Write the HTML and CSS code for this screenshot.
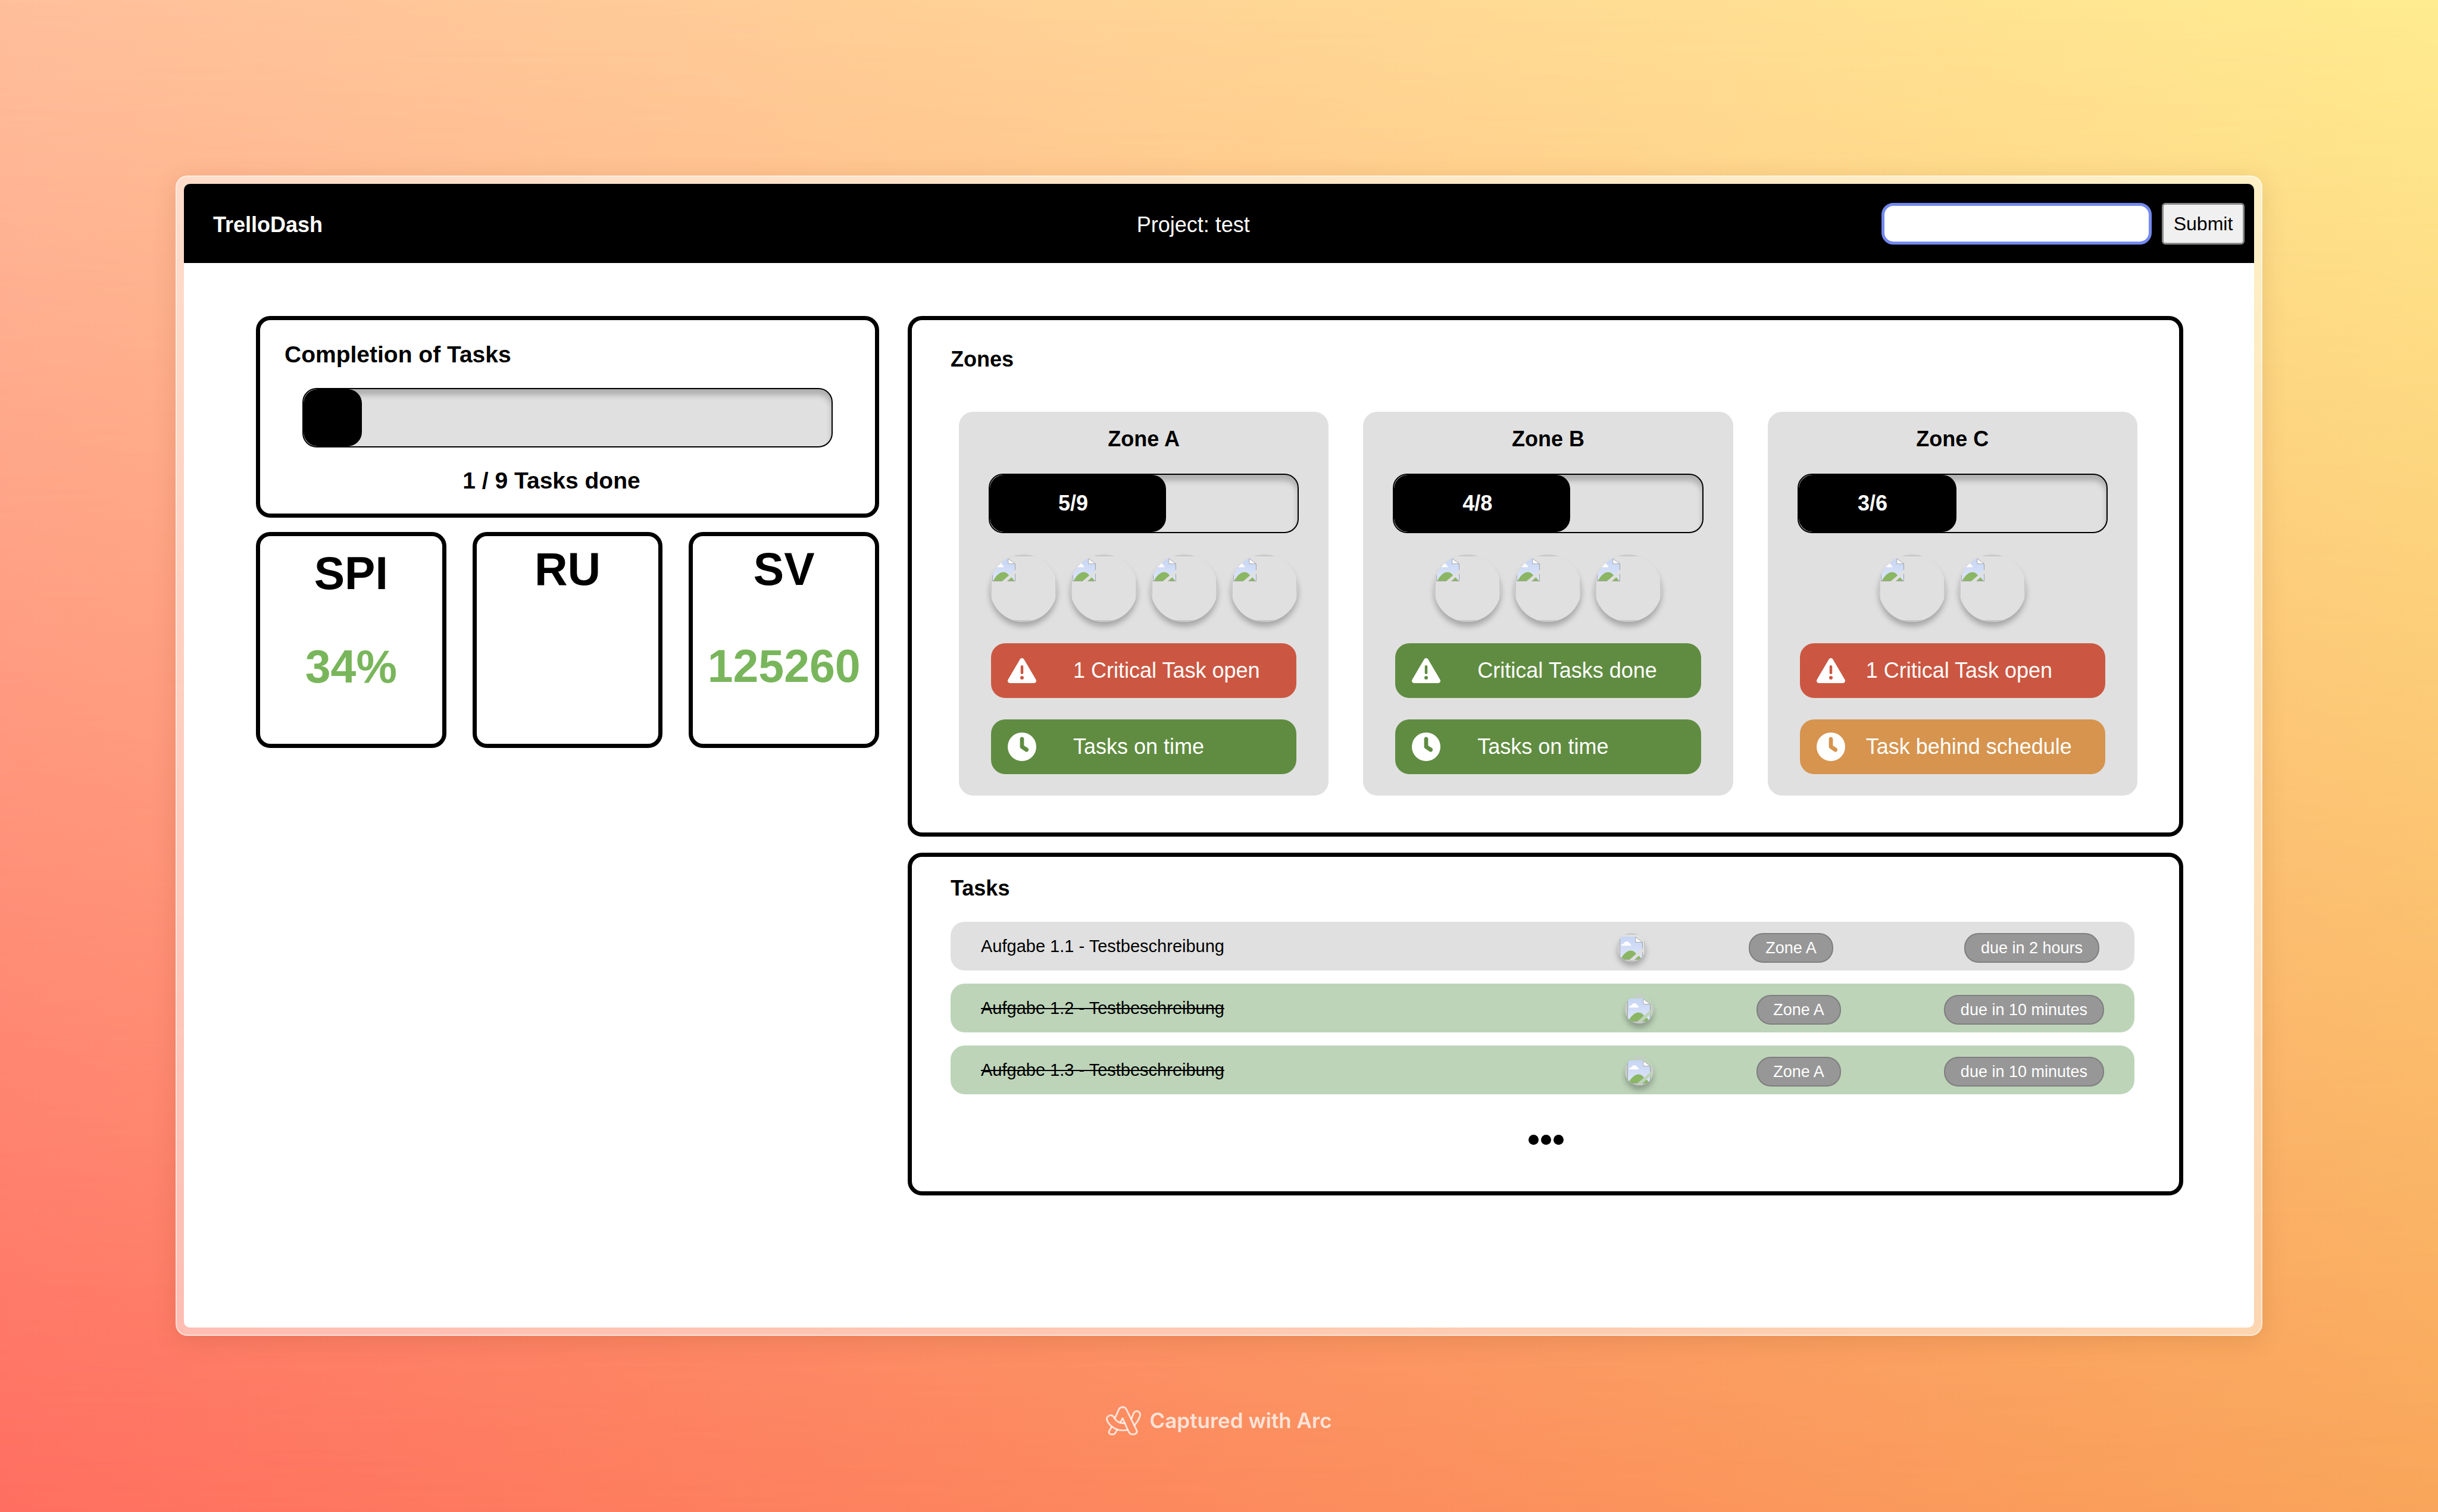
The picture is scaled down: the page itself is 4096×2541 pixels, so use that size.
FILE: index.html
```html
<!DOCTYPE html>
<html lang="en">
<head>
<meta charset="utf-8">
<title>TrelloDash</title>
<meta name="viewport" content="width=device-width, initial-scale=1">
<link rel="stylesheet" href="styles.css">
</head>
<body>
<svg class="sprite" aria-hidden="true">
  <symbol id="broken" viewBox="0 0 16 16">
    <defs>
      <linearGradient id="sky" x1="0" y1="0" x2="0" y2="1"><stop offset="0" stop-color="#c6d5f4"/><stop offset="1" stop-color="#dfe6f8"/></linearGradient>
      <clipPath id="torn"><path d="M0 0H16V8L6.8 16H0ZM16 10.7V16H10.2Z"/></clipPath>
    </defs>
    <g clip-path="url(#torn)">
      <path d="M0 0H11L16 4V16H0Z" fill="url(#sky)"/>
      <path d="M1.2 6.3C1.2 5.2 2 4.7 2.9 4.8C3.2 3.6 4.2 3.2 5.2 3.4C6.3 3.5 6.8 4.2 6.9 4.8C7.9 5 8 5.8 7.7 6.3Z" fill="#fff"/>
      <path d="M.6 15.7C3 11.4 5.4 9.6 7.8 9.6C10.3 9.6 11.8 12 12.6 13.6L13.4 13.2L15.4 15.7Z" fill="#8bb663"/>
      <path d="M0.2 0V15.8H15.8V4" fill="none" stroke="#a3a3a8" stroke-width=".45"/>
      <path d="M11 .3V3.9H15.8Z" fill="#fff" stroke="#a3a3a8" stroke-width=".4"/>
    </g>
  </symbol>
  <symbol id="warning" viewBox="0 0 512 512">
    <path fill="currentColor" d="M256 32c14.200 0 27.300 7.500 34.500 19.800l216 368c7.300 12.400 7.300 27.700.2 40.100S486.300 480 472 480H40c-14.300 0-27.600-7.700-34.700-20.100s-7-27.800.2-40.100l216-368C228.700 39.500 241.800 32 256 32zm0 128c-13.300 0-24 10.700-24 24v112c0 13.300 10.700 24 24 24s24-10.700 24-24V184c0-13.300-10.700-24-24-24zm32 224a32 32 0 1 0-64 0 32 32 0 1 0 64 0z"/>
  </symbol>
  <symbol id="clock" viewBox="0 0 512 512">
    <path fill="currentColor" fill-rule="evenodd" d="M256 0a256 256 0 1 1 0 512A256 256 0 1 1 256 0zM220 116v140c0 12 6 23 16 30l80 54c18 12 40 7 52-10s7-40-10-52l-66-44V116c0-20-16-36-36-36s-36 16-36 36z"/>
  </symbol>
</svg>

<main class="frame">
  <div class="window">
    <header class="topbar">
      <strong class="brand">TrelloDash</strong>
      <span class="project">Project: test</span>
      <form class="search" onsubmit="return false">
        <input class="search-input" type="text" aria-label="Project">
        <button class="search-button" type="submit">Submit</button>
      </form>
    </header>

    <div class="content">
      <div class="column column-left">
        <section class="card completion">
          <h2 class="completion-title">Completion of Tasks</h2>
          <div class="bar"><div class="bar-fill" style="width:11.1%"></div></div>
          <p class="completion-note">1 / 9 Tasks done</p>
        </section>
        <div class="kpis">
          <section class="card kpi kpi-low"><h2>SPI</h2><p>34%</p></section>
          <section class="card kpi"><h2>RU</h2></section>
          <section class="card kpi"><h2>SV</h2><p>125260</p></section>
        </div>
      </div>

      <div class="column column-right">
        <section class="card zones">
          <h2 class="card-title">Zones</h2>
          <div class="zone-grid">
            <article class="zone">
              <h3 class="zone-title">Zone A</h3>
              <div class="bar"><div class="bar-fill" style="width:57.2%">5/9</div></div>
              <div class="avatars">
                <span class="avatar"><span class="avatar-box"><svg><use href="#broken"/></svg></span></span>
                <span class="avatar"><span class="avatar-box"><svg><use href="#broken"/></svg></span></span>
                <span class="avatar"><span class="avatar-box"><svg><use href="#broken"/></svg></span></span>
                <span class="avatar"><span class="avatar-box"><svg><use href="#broken"/></svg></span></span>
              </div>
              <div class="status red"><svg><use href="#warning"/></svg>1 Critical Task open</div>
              <div class="status green"><svg><use href="#clock"/></svg>Tasks on time</div>
            </article>
            <article class="zone">
              <h3 class="zone-title">Zone B</h3>
              <div class="bar"><div class="bar-fill" style="width:57.2%">4/8</div></div>
              <div class="avatars">
                <span class="avatar"><span class="avatar-box"><svg><use href="#broken"/></svg></span></span>
                <span class="avatar"><span class="avatar-box"><svg><use href="#broken"/></svg></span></span>
                <span class="avatar"><span class="avatar-box"><svg><use href="#broken"/></svg></span></span>
              </div>
              <div class="status green"><svg><use href="#warning"/></svg>Critical Tasks done</div>
              <div class="status green"><svg><use href="#clock"/></svg>Tasks on time</div>
            </article>
            <article class="zone zone-late">
              <h3 class="zone-title">Zone C</h3>
              <div class="bar"><div class="bar-fill" style="width:51.2%">3/6</div></div>
              <div class="avatars">
                <span class="avatar"><span class="avatar-box"><svg><use href="#broken"/></svg></span></span>
                <span class="avatar"><span class="avatar-box"><svg><use href="#broken"/></svg></span></span>
              </div>
              <div class="status red"><svg><use href="#warning"/></svg>1 Critical Task open</div>
              <div class="status orange"><svg><use href="#clock"/></svg>Task behind schedule</div>
            </article>
          </div>
        </section>

        <section class="card tasks">
          <h2 class="card-title">Tasks</h2>
          <ul class="task-list">
            <li class="task task-open">
              <span class="task-name">Aufgabe 1.1 - Testbeschreibung</span>
              <span class="avatar avatar-small"><span class="avatar-box"><svg><use href="#broken"/></svg></span></span>
              <span class="chip">Zone A</span>
              <span class="chip chip-due">due in 2 hours</span>
            </li>
            <li class="task task-done">
              <s class="task-name">Aufgabe 1.2 - Testbeschreibung</s>
              <span class="avatar avatar-small"><span class="avatar-box"><svg><use href="#broken"/></svg></span></span>
              <span class="chip">Zone A</span>
              <span class="chip chip-due">due in 10 minutes</span>
            </li>
            <li class="task task-done">
              <s class="task-name">Aufgabe 1.3 - Testbeschreibung</s>
              <span class="avatar avatar-small"><span class="avatar-box"><svg><use href="#broken"/></svg></span></span>
              <span class="chip">Zone A</span>
              <span class="chip chip-due">due in 10 minutes</span>
            </li>
          </ul>
          <button class="more" type="button" aria-label="Show more tasks"><i></i><i></i><i></i></button>
        </section>
      </div>
    </div>
  </div>
</main>

<footer class="credit">
  <svg class="arc" viewBox="0 0 74 61" fill="none" stroke="currentColor" stroke-width="3.6" stroke-linejoin="round" stroke-linecap="round" aria-hidden="true">
    <path d="M19.500 24L27.500 6.500C30.500 .4 40 .4 43 6.500L64.500 50C67.500 56 62 59.500 57 59.500C53 59.500 50 58 48 54L35.200 25.500L30 35"/>
    <path d="M39.500 35.600C31 36.500 22.500 32.500 17.500 24.500C15.500 20.500 12.500 18.800 9 19.400C3.500 20.200 .5 25 2.300 29.500C7.500 42 21 51 35 51C38.500 51 41.500 50.800 45 50"/>
    <path d="M54.300 26L58 15.500C60 10.500 65 9.500 68.500 11.500C72.300 13.500 73 17 71.500 21.500C69 29 65.500 34.500 60 40"/>
    <path d="M11.500 44.500L7 52C4.500 57 9 59.800 14 59.600C17.500 59.400 19.300 58 20.500 55.500L23.500 50"/>
  </svg>
  <span>Captured with Arc</span>
</footer>
</body>
</html>
```

FILE: styles.css
```css
* {
  box-sizing: border-box;
}

body {
  margin: 0;
  min-height: 100vh;
  display: flex;
  flex-direction: column;
  position: relative;
  isolation: isolate;
  padding: 295px 295px 0;
  background: linear-gradient(to right, #ffbf9b, #ffec90);
  color: #000;
  font-family: "Liberation Sans", Arial, Helvetica, sans-serif;
  font-size: 36px;
  line-height: 44px;
}

/* warm lower half, faded in over the top gradient */
body::before {
  content: "";
  position: absolute;
  inset: 0;
  z-index: -1;
  background: linear-gradient(to right, #ff6e60, #f9a55a);
  -webkit-mask-image: linear-gradient(transparent, #000);
  mask-image: linear-gradient(transparent, #000);
}

h2,
h3,
p,
ul {
  margin: 0;
  padding: 0;
}

svg {
  display: block;
  flex: none;
}

.sprite {
  position: absolute;
  width: 0;
  height: 0;
}

/* window */
.frame {
  flex: 1;
  display: flex;
  padding: 12px;
  border: 2px solid rgba(255, 255, 255, 0.5);
  border-radius: 20px;
  background: rgba(255, 255, 255, 0.5);
  box-shadow: 0 8px 40px rgba(120, 60, 20, 0.16);
}

.window {
  flex: 1;
  border-radius: 10px;
  overflow: hidden;
  background: #fff;
}

.topbar {
  display: grid;
  grid-template-columns: 13fr auto 14fr;
  align-items: center;
  height: 133px;
  padding: 0 16px 0 49px;
  background: #000;
  color: #fff;
}

.brand,
.project {
  padding-top: 5px;
}

.search {
  display: flex;
  justify-content: flex-end;
  gap: 17px;
}

.search-input {
  width: 454px;
  height: 70px;
  padding: 0 16px;
  border: 5px solid #7489ef;
  border-radius: 20px;
  background: #fff;
  font: inherit;
  outline: none;
}

.search-button {
  width: 139px;
  height: 70px;
  padding: 0;
  border: 3px solid #8a8a8a;
  border-radius: 6px;
  background: #f0f0f0;
  color: #000;
  font: inherit;
  font-size: 32px;
}

.content {
  display: grid;
  grid-template-columns: 1047fr 2143fr;
  gap: 48px;
  align-items: start;
  padding: 89px 119px 89px 121px;
}

.column {
  display: flex;
  flex-direction: column;
}

.column-left {
  gap: 24px;
}

.column-right {
  gap: 27px;
}

.card {
  border: 7px solid #000;
  border-radius: 24px;
}

.card-title {
  font-size: 36px;
}

/* completion */
.completion {
  display: flex;
  flex-direction: column;
  gap: 34px;
  padding: 36px 41px 33px;
}

.completion-title,
.completion-note {
  font-size: 39px;
  font-weight: bold;
}

.completion .bar {
  margin: 0 30px;
}

.completion-note {
  padding-right: 54px;
  text-align: center;
}

.bar {
  display: flex;
  height: 100px;
  border: 2px solid #000;
  border-radius: 24px;
  overflow: hidden;
  background: #e0e0e0;
  box-shadow: inset 0 10px 10px rgba(0, 0, 0, 0.22);
}

.bar-fill {
  display: flex;
  align-items: center;
  justify-content: center;
  padding-right: 16px;
  border-radius: 24px;
  background: #000;
  color: #fff;
  font-weight: bold;
}

/* key figures */
.kpis {
  display: grid;
  grid-template-columns: repeat(3, 1fr);
  gap: 44px;
}

.kpi {
  display: flex;
  flex-direction: column;
  align-items: center;
  gap: 75px;
  padding: 11px 0 86px;
  font-size: 77px;
  font-weight: bold;
  line-height: 88px;
}

.kpi-low {
  gap: 69px;
  padding-top: 18px;
}

.kpi h2 {
  font-size: inherit;
}

.kpi p {
  color: #79b65b;
}

/* zones */
.zones {
  display: flex;
  flex-direction: column;
  gap: 66px;
  padding: 44px 70px 62px 65px;
}

.zone-grid {
  display: grid;
  grid-template-columns: repeat(3, 1fr);
  gap: 58px;
  margin-left: 14px;
}

.zone {
  display: flex;
  flex-direction: column;
  gap: 36px;
  padding: 24px 50px 36px;
  border-radius: 24px;
  background: #e0e0e0;
}

.zone-title {
  font-size: 36px;
  text-align: center;
}

.avatars {
  display: flex;
  justify-content: center;
  gap: 22px;
}

.avatar {
  flex: none;
  width: 113px;
  height: 113px;
  border-radius: 50%;
  overflow: hidden;
  box-shadow: 0 8px 10px rgba(0, 0, 0, 0.25);
}

.avatar-box {
  display: block;
  height: 100%;
  padding: 3px 1px;
  border: 3px solid #c9c9c9;
}

.avatar svg {
  width: 39px;
  height: 39px;
}

.status {
  display: flex;
  align-items: center;
  gap: 62px;
  height: 92px;
  margin: 0 4px;
  padding: 0 28px;
  border-radius: 24px;
  color: #fff;
  white-space: nowrap;
}

.zone-late .status {
  gap: 35px;
}

.status svg {
  width: 48px;
  height: 48px;
}

.red {
  background: #cb5742;
}

.green {
  background: #608c41;
}

.orange {
  background: #d6944e;
}

/* tasks */
.tasks {
  display: flex;
  flex-direction: column;
  padding: 31px 75px 78px 65px;
}

.task-list {
  display: flex;
  flex-direction: column;
  gap: 22px;
  margin-top: 34px;
  list-style: none;
}

.task {
  display: flex;
  align-items: center;
  height: 82px;
  padding: 0 51px;
  border-radius: 24px;
  background: #e0e0e0;
  font-size: 29px;
}

.task-open {
  padding-right: 59px;
}

.task-done {
  background: #bdd4b9;
}

.task-name {
  flex: 1;
}

.avatar-small {
  width: 48px;
  height: 48px;
  margin-top: 4px;
}

.chip {
  height: 50px;
  margin-top: 5px;
  margin-left: 173px;
  padding: 0 26px;
  border: 2px solid #7f7f7f;
  border-radius: 24px;
  background: #979797;
  color: #fff;
  font-size: 27px;
  line-height: 46px;
  white-space: nowrap;
}

.task-open .chip-due {
  margin-left: 220px;
}

/* centred on the card, whose side paddings differ by 10px */
.more {
  display: flex;
  gap: 4px;
  align-self: center;
  margin-top: 68px;
  padding: 0 0 0 12px;
  border: 0;
  background: none;
}

.more i {
  width: 17px;
  height: 17px;
  border-radius: 50%;
  background: #000;
}

/* credit line */
.credit {
  display: flex;
  align-items: center;
  justify-content: center;
  gap: 14px;
  height: 296px;
  padding-bottom: 12px;
  color: rgba(255, 255, 255, 0.75);
  font-family: Inter, sans-serif;
  font-size: 35px;
  font-weight: 600;
}

.arc {
  width: 59px;
  height: 49px;
}
```
